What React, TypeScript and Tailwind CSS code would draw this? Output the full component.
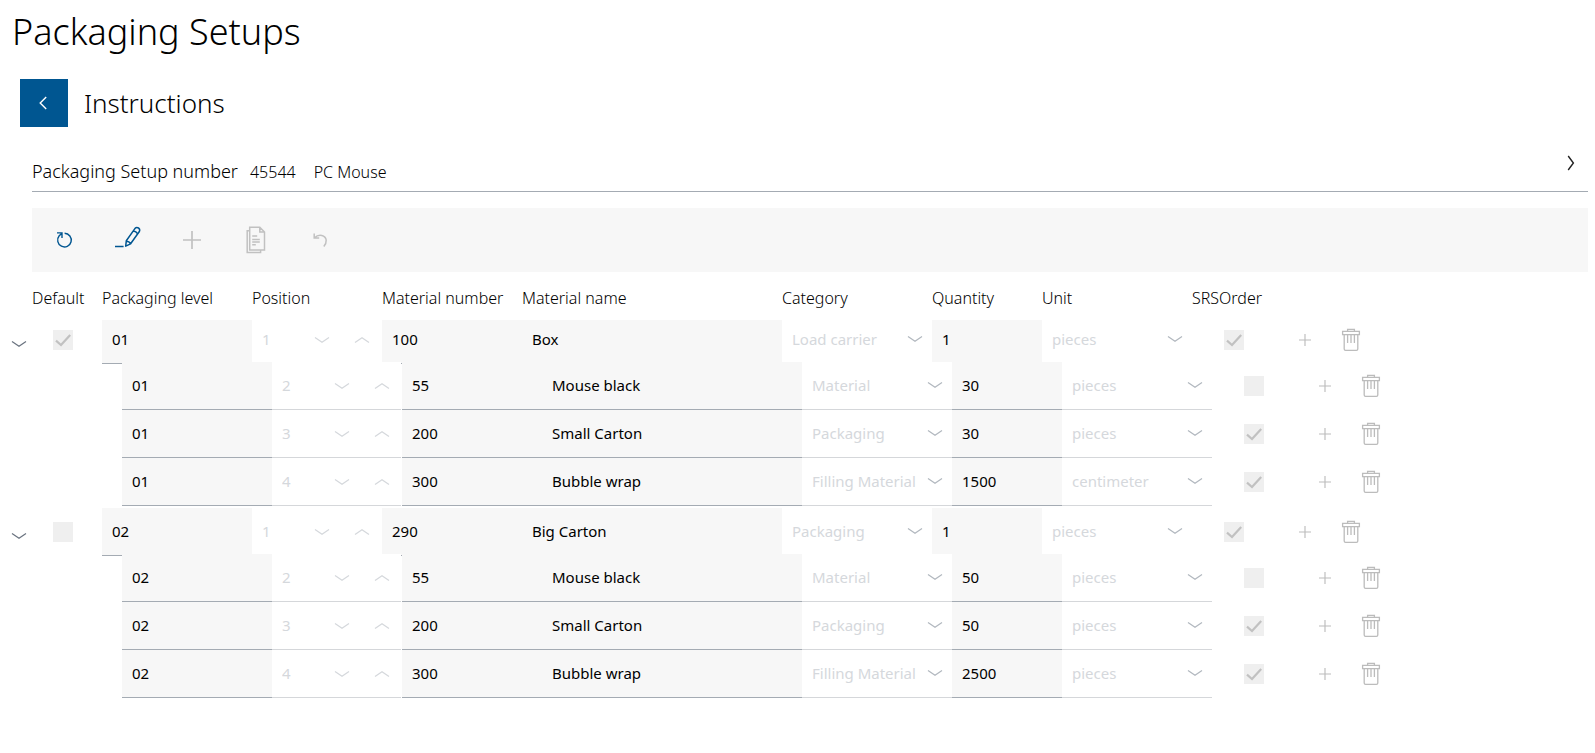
import React from "react";

type Line = {
  level: string;
  position: string;
  number: string;
  name: string;
  category: string;
  quantity: string;
  unit: string;
  srs: boolean;
};

type Group = { parent: Line; isDefault: boolean; children: Line[] };

const line = (
  level: string,
  position: string,
  number: string,
  name: string,
  category: string,
  quantity: string,
  unit: string,
  srs: boolean,
): Line => ({ level, position, number, name, category, quantity, unit, srs });

const groups: Group[] = [
  {
    isDefault: true,
    parent: line("01", "1", "100", "Box", "Load carrier", "1", "pieces", true),
    children: [
      line("01", "2", "55", "Mouse black", "Material", "30", "pieces", false),
      line("01", "3", "200", "Small Carton", "Packaging", "30", "pieces", true),
      line("01", "4", "300", "Bubble wrap", "Filling Material", "1500", "centimeter", true),
    ],
  },
  {
    isDefault: false,
    parent: line("02", "1", "290", "Big Carton", "Packaging", "1", "pieces", true),
    children: [
      line("02", "2", "55", "Mouse black", "Material", "50", "pieces", false),
      line("02", "3", "200", "Small Carton", "Packaging", "50", "pieces", true),
      line("02", "4", "300", "Bubble wrap", "Filling Material", "2500", "pieces", true),
    ],
  },
];

const categories = ["Load carrier", "Material", "Packaging", "Filling Material"];
const units = ["pieces", "centimeter"];

function Chevron({ up = false, className = "" }: { up?: boolean; className?: string }) {
  return (
    <svg viewBox="0 0 16 8" className={`h-2 w-4 ${className}`} fill="none" stroke="currentColor" strokeWidth="1.3" aria-hidden="true">
      <path d={up ? "M1 6.5 8 1.8l7 4.7" : "M1 1.5 8 6.2l7-4.7"} />
    </svg>
  );
}

function TextField({ label, value }: { label: string; value: string }) {
  return (
    <input
      aria-label={label}
      defaultValue={value}
      className="h-12 w-full rounded-none border-b border-[#a4abb3] bg-[#f7f7f7] px-2.5 pb-0.5 text-[15px] text-black outline-none"
    />
  );
}

function PositionField({ value }: { value: string }) {
  return (
    <div className="flex h-12 w-[129px] items-center border-b border-[#d5d7da] bg-white text-[#d5d8dc]">
      <input aria-label="Position" disabled defaultValue={value} className="w-[50px] bg-transparent pl-2.5 text-[15px]" />
      <button type="button" disabled aria-label="Decrease position" className="flex h-10 w-10 items-center justify-center">
        <Chevron />
      </button>
      <button type="button" disabled aria-label="Increase position" className="flex h-10 w-[39px] items-center justify-center">
        <Chevron up />
      </button>
    </div>
  );
}

function SelectField({ label, value, options }: { label: string; value: string; options: string[] }) {
  return (
    <div className="relative h-12 w-full border-b border-[#d5d7da] bg-white">
      <select
        aria-label={label}
        disabled
        defaultValue={value}
        className="h-full w-full appearance-none bg-transparent px-2.5 text-[15px] text-[#d5d8dc] opacity-100"
      >
        {options.map((o) => (
          <option key={o}>{o}</option>
        ))}
      </select>
      <Chevron className="pointer-events-none absolute right-[9px] top-[19px] text-[#b2b8bf]" />
    </div>
  );
}

function Tick({ label, checked }: { label: string; checked: boolean }) {
  return (
    <span className="grid h-5 w-5 place-items-center bg-[#efefef]">
      <input type="checkbox" aria-label={label} disabled defaultChecked={checked} className="peer col-start-1 row-start-1 h-5 w-5 appearance-none" />
      <svg viewBox="0 0 20 20" className="pointer-events-none col-start-1 row-start-1 hidden h-5 w-5 peer-checked:block" fill="none" stroke="#c1c1c1" strokeWidth="2.2" aria-hidden="true">
        <path d="M3 10.7 8 15 17.2 5" />
      </svg>
    </span>
  );
}

function Plus({ className }: { className: string }) {
  return (
    <svg viewBox="0 0 18 18" className={className} fill="none" stroke="currentColor" strokeWidth="1.7" aria-hidden="true">
      <path d="M9 0v18M0 9h18" />
    </svg>
  );
}

function Trash() {
  return (
    <svg viewBox="0 0 20 24" className="h-6 w-5" fill="none" stroke="currentColor" strokeWidth="1.3" aria-hidden="true">
      <path d="M1.6 3.4h16.8v3.2H1.6zM6.6 3.4v-2h6.8v2M3.2 6.6v14.4q0 1.4 1.4 1.4h10.8q1.4 0 1.4-1.4V6.6M6.6 7v8M10 7v8M13.4 7v8" />
    </svg>
  );
}

function Row({ data, leading }: { data: Line; leading?: { isDefault: boolean } }) {
  return (
    <tr className={leading ? "-mb-0.5 flex" : "relative ml-5 flex"}>
      <td className="flex w-8 shrink-0 items-center pl-[11px] pt-2">
        {leading && (
          <button type="button" aria-label="Collapse group" className="text-[#6b7480]">
            <Chevron />
          </button>
        )}
      </td>
      <td className="flex w-[70px] shrink-0 items-center pl-[21px]">
        {leading && <Tick label="Default" checked={leading.isDefault} />}
      </td>
      <td className="w-[150px] shrink-0"><TextField label="Packaging level" value={data.level} /></td>
      <td className="w-[130px] shrink-0"><PositionField value={data.position} /></td>
      <td className="w-[140px] shrink-0"><TextField label="Material number" value={data.number} /></td>
      <td className="w-[260px] shrink-0"><TextField label="Material name" value={data.name} /></td>
      <td className="w-[150px] shrink-0"><SelectField label="Category" value={data.category} options={categories} /></td>
      <td className="w-[110px] shrink-0"><TextField label="Quantity" value={data.quantity} /></td>
      <td className="w-[150px] shrink-0"><SelectField label="Unit" value={data.unit} options={units} /></td>
      <td className="flex w-[100px] shrink-0 items-center pl-8"><Tick label="SRSOrder" checked={data.srs} /></td>
      <td className="flex shrink-0 items-center text-[#bcbcbc]">
        <button type="button" disabled aria-label="Add line" className="flex h-8 w-[26px] items-center justify-center">
          <Plus className="h-3 w-3" />
        </button>
        <button type="button" disabled aria-label="Delete line" className="ml-5 flex h-8 w-[26px] items-center justify-center">
          <Trash />
        </button>
      </td>
    </tr>
  );
}

const heads: [string, string][] = [
  ["Default", "w-[70px]"],
  ["Packaging level", "w-[150px]"],
  ["Position", "w-[130px]"],
  ["Material number", "w-[140px]"],
  ["Material name", "w-[260px]"],
  ["Category", "w-[150px]"],
  ["Quantity", "w-[110px]"],
  ["Unit", "w-[150px]"],
  ["SRSOrder", "w-[100px]"],
];

const tool = "flex h-16 w-16 items-center justify-center";

export default function App() {
  return (
    <main className="min-h-screen overflow-x-hidden bg-white pb-8 font-['Noto_Sans',sans-serif] text-black">
      <h1 className="px-3 pt-1.5 text-[36px] font-light leading-[52px]">Packaging Setups</h1>

      <div className="mt-[21px] flex items-center gap-4 pl-5">
        <button type="button" aria-label="Back" className="flex h-12 w-12 items-center justify-center bg-[#005691] text-white">
          <svg viewBox="0 0 8 14" className="mr-0.5 h-3.5 w-2" fill="none" stroke="currentColor" strokeWidth="1.4" aria-hidden="true">
            <path d="M7.2 1 1.2 7l6 6" />
          </svg>
        </button>
        <h2 className="text-[26px] font-light leading-8">Instructions</h2>
      </div>

      <section className="ml-8 mr-[7px] mt-6">
        <div className="flex h-[41px] items-center border-b border-[#a4abb3]">
          <div className="flex items-baseline">
            <span className="text-[18px] font-light leading-6">Packaging Setup number</span>
            <span className="ml-3 text-[16px] font-light leading-6">45544</span>
            <span className="ml-[18px] text-[16px] font-light leading-6">PC Mouse</span>
          </div>
          <button type="button" aria-label="Expand details" className="mb-4 ml-auto mr-[13px]">
            <svg viewBox="0 0 8 16" className="h-4 w-2" fill="none" stroke="#222" strokeWidth="1.4" aria-hidden="true">
              <path d="M1.2 1 6.4 8l-5.2 7" />
            </svg>
          </button>
        </div>

        <div role="toolbar" aria-label="Table actions" className="mt-4 flex h-16 items-center bg-[#f7f7f7] text-[#c1c1c1]">
          <button type="button" aria-label="Refresh" className={`${tool} text-[#005691]`}>
            <svg viewBox="0 0 18 18" className="h-[18px] w-[18px]" fill="none" stroke="currentColor" strokeWidth="1.4" aria-hidden="true">
              <path d="M9.6 2.3a6.8 6.8 0 1 1-5.4 2.5L7 2.2M2 1.9h5v5" />
            </svg>
          </button>
          <button type="button" aria-label="Edit" className={`${tool} text-[#005691]`}>
            <svg viewBox="0 0 28 28" className="h-7 w-7" fill="none" stroke="currentColor" strokeWidth="1.5" strokeLinejoin="round" aria-hidden="true">
              <path d="M1 20.6h8.6M11.7 20.2l.6-5.4L20.9 2.6q1.6-1.9 3.6-.6t.7 3.8L16.6 17.8zM12.5 15.2q2.8.2 4 2.5M19.5 5q2.8.2 4 2.7" />
            </svg>
          </button>
          <button type="button" disabled aria-label="Add" className={tool}>
            <Plus className="h-[18px] w-[18px]" />
          </button>
          <button type="button" disabled aria-label="Copy" className={tool}>
            <svg viewBox="0 0 20 28" className="h-7 w-5" fill="none" stroke="currentColor" strokeWidth="1.5" aria-hidden="true">
              <path d="M3.7 1.2h10.1l4.7 4.9v18H3.7zM13.8 1.2v4.9h4.7M3.7 4.8H1.2v21.8h13.4v-2.5M6.2 10h5M6.2 13.4h7.6M6.2 16h7.6M6.2 18.8h3.6" />
            </svg>
          </button>
          <button type="button" disabled aria-label="Undo" className={tool}>
            <svg viewBox="0 0 16 16" className="h-4 w-4" fill="none" stroke="currentColor" strokeWidth="1.5" aria-hidden="true">
              <path d="M2.2 1.4v4.6h5M2.4 5.8q3.6-3.4 7.4-2.4t4.4 4.6q.2 3.8-2.4 6.6" />
            </svg>
          </button>
        </div>
      </section>

      <table className="block">
        <thead className="relative z-10 block bg-white pl-8">
          <tr className="flex h-12 items-center pt-1">
            {heads.map(([label, width]) => (
              <th key={label} scope="col" className={`${width} shrink-0 whitespace-nowrap text-left text-[16px] font-light leading-6`}>
                {label}
              </th>
            ))}
          </tr>
        </thead>
        {groups.map((group, i) => (
          <tbody key={group.parent.level} className={i === 0 ? "-mt-1 block pb-0.5" : "block pb-0.5"}>
            <Row data={group.parent} leading={{ isDefault: group.isDefault }} />
            {group.children.map((child) => (
              <Row key={child.position} data={child} />
            ))}
          </tbody>
        ))}
      </table>
    </main>
  );
}
